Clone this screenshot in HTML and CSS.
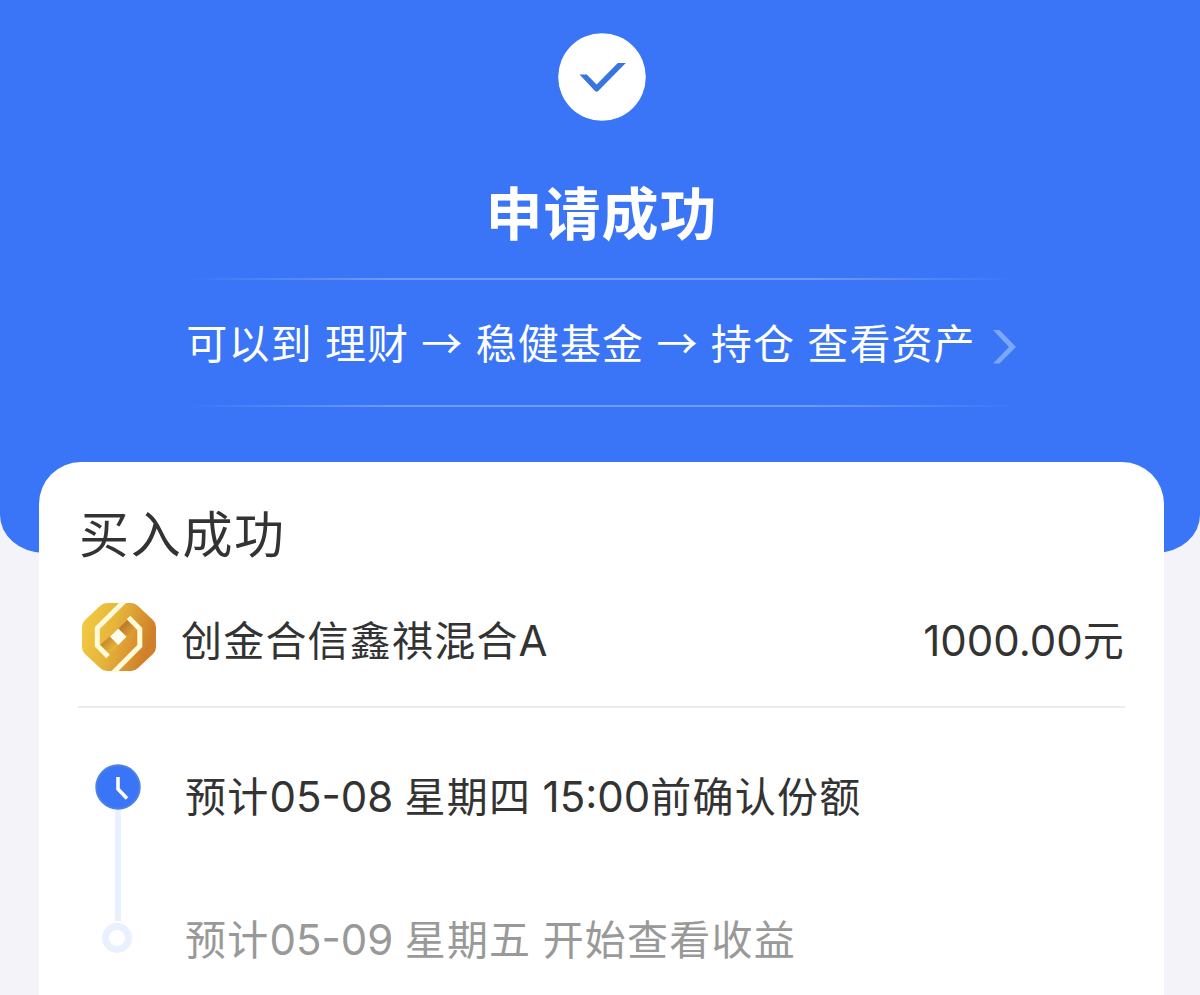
FILE: index.html
```
<!DOCTYPE html>
<html lang="zh-CN">
<head>
    <meta charset="UTF-8">
    <meta name="viewport" content="width=device-width, initial-scale=1.0">
    <title>申请成功</title>
    <link rel="stylesheet" href="styles.css">
</head>
<body>
    <div class="header">
        <svg class="check" width="88" height="88" viewBox="0 0 88 88">
            <circle cx="44" cy="44" r="43.8" fill="#fff"/>
            <path d="M21.5 41.4h7.3l9.8 10 21.2-21.3h8L40.2 58q-1.6 1.4-3.2 0z" fill="#3975e2"/>
        </svg>
        <h1>申请成功</h1>
        <div class="assets-link">
            <span class="path">可以到 理财 → 稳健基金 → 持仓 查看资产</span>
            <svg class="chevron" width="24" height="34" viewBox="0 0 24 34">
                <path d="M0 0h6.5L23 17 6.5 33.5H0L16 17z" fill="#7ba8ff"/>
            </svg>
        </div>
    </div>
    <div class="card">
        <h2>买入成功</h2>
        <div class="fund">
            <svg class="logo" width="76" height="70" viewBox="0 0 76 70">
                <defs>
                    <linearGradient id="gold" x1="0" y1="0" x2="1" y2="0.3">
                        <stop offset="0" stop-color="#f3cf43"/>
                        <stop offset="0.5" stop-color="#e6b43a"/>
                        <stop offset="1" stop-color="#d07f2a"/>
                    </linearGradient>
                    <linearGradient id="foldTop" x1="0.2" y1="0.2" x2="0.8" y2="0.8">
                        <stop offset="0" stop-color="#b9702a"/>
                        <stop offset="1" stop-color="#e0a336"/>
                    </linearGradient>
                    <linearGradient id="foldBottom" x1="0.2" y1="0.2" x2="0.8" y2="0.8">
                        <stop offset="0" stop-color="#c08329"/>
                        <stop offset="1" stop-color="#efc03e"/>
                    </linearGradient>
                </defs>
                <path d="M26 1h24q4 0 7 3l15 14q3 3 3 7v20q0 4-3 7L57 66q-3 3-7 3H26q-4 0-7-3L4 52q-3-3-3-7V25q0-4 3-7L19 4q3-3 7-3z" fill="url(#gold)"/>
                <path d="M37 27l11-10.5 8 9.5-11 10z" fill="url(#foldTop)"/>
                <path d="M18.5 43.5L29.5 34l8 8.5L26 53z" fill="url(#foldBottom)"/>
                <path d="M37.3 26.5l8.2 8.3-8.2 8.2-8.2-8.2z" fill="#fffdf0"/>
                <path d="M43.500-1L16.300 26v17.500l10.700 11M31.500 71.500L58.800 44V27L47.500 15.500" fill="none" stroke="#fffbd8" stroke-width="5"/>
            </svg>
            <span class="fund-name">创金合信鑫祺混合<span class="letter">A</span></span>
            <span class="amount"><span class="num">1000.00</span>元</span>
        </div>
        <div class="timeline">
            <div class="track">
                <svg class="clock" width="46" height="46" viewBox="0 0 46 46">
                    <circle cx="23" cy="23" r="21.7" fill="#3975f6" stroke="#4b82e4" stroke-width="2"/>
                    <path d="M23 13v12l9 9.500" fill="none" stroke="#fff" stroke-width="3.6"/>
                </svg>
                <div class="line"></div>
                <div class="dot"></div>
            </div>
            <div class="steps">
                <div class="step">预计<span class="num">05-08</span> 星期四 <span class="num">15:00</span>前确认份额</div>
                <div class="step pending">预计<span class="num">05-09</span> 星期五 开始查看收益</div>
            </div>
        </div>
    </div>
</body>
</html>
```
FILE: styles.css
```
* {
    box-sizing: border-box;
}

body {
    margin: 0;
    height: 995px;
    background-color: #f4f3f9;
    font-family: "Noto Sans CJK SC", sans-serif;
    color: #333;
}

h1, h2 {
    margin: 0;
}

.header {
    display: flex;
    flex-direction: column;
    align-items: center;
    height: 553px;
    padding: 33px 0 0 3px;
    background-color: #3975f6;
    border-radius: 0 0 44px 44px / 0 0 38px 38px;
    color: #fff;
}

.check {
    display: block;
}

h1 {
    margin-top: 49px;
    font-size: 57px;
    font-weight: 700;
    line-height: 80px;
    letter-spacing: 1px;
}

/* hairlines fade out towards both ends */
.assets-link {
    display: flex;
    align-items: center;
    justify-content: center;
    width: 830px;
    height: 129px;
    margin-top: 28px;
    background:
        linear-gradient(90deg, transparent, #6e9dfa 25%, #6e9dfa 75%, transparent) top / 100% 2px no-repeat,
        linear-gradient(90deg, transparent, #6e9dfa 25%, #6e9dfa 75%, transparent) bottom / 100% 2px no-repeat;
}

.path {
    margin-top: -3px;
    font-size: 41px;
    line-height: 60px;
    letter-spacing: 1.1px;
    word-spacing: 2px;
    white-space: nowrap;
}

.chevron {
    flex-shrink: 0;
    margin: 9px 0 0 17px;
}

/* card overlaps the bottom of the header */
.card {
    width: 1125px;
    height: 533px;
    margin: -91px 0 0 39px;
    padding: 33px 39px 0;
    position: relative;
    background-color: #fff;
    border-radius: 42px 42px 0 0;
}

h2 {
    padding-left: 1px;
    font-size: 50px;
    font-weight: 400;
    line-height: 72px;
    letter-spacing: 1.7px;
}

.fund {
    display: flex;
    align-items: center;
    height: 138px;
    margin-top: 3px;
    border-bottom: 2px solid #ececee;
    font-size: 41px;
    letter-spacing: 1.2px;
}

.logo {
    margin: 0 24px 2px 3px;
}

.amount {
    margin-left: auto;
}

.num,
.letter {
    font-family: Inter, sans-serif;
    font-size: 42px;
    letter-spacing: 0;
}

.timeline {
    display: flex;
    padding: 56px 0 0 17px;
}

.track {
    display: flex;
    flex-direction: column;
    align-items: center;
    width: 46px;
}

.line {
    width: 6px;
    height: 111px;
    background-color: #e8f1fd;
}

.dot {
    width: 30px;
    height: 30px;
    margin: 2px 2px 0 0;
    border: 7px solid #e8f1fd;
    border-radius: 50%;
}

.steps {
    margin: -3px 0 0 44px;
}

.step {
    height: 143px;
    font-size: 41px;
    line-height: 66px;
    letter-spacing: 1.2px;
    word-spacing: 1px;
    white-space: nowrap;
}

.pending {
    height: 66px;
    color: #999;
}
```
